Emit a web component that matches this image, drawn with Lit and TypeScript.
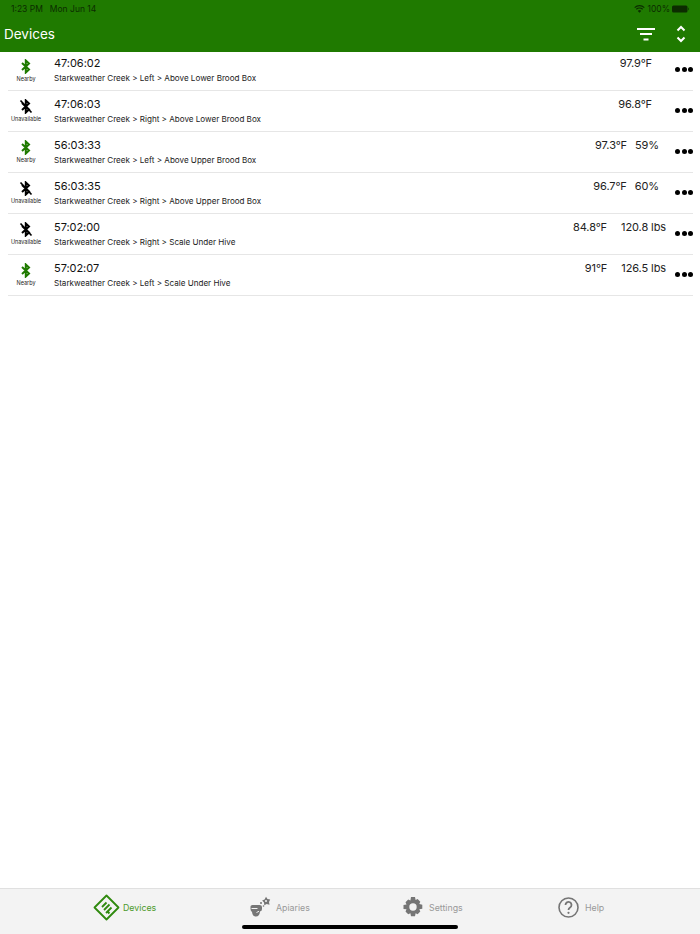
import { LitElement, html, css, svg } from "lit";
import { customElement } from "lit/decorators.js";

const rows = [
  { id: "47:06:02", path: "Starkweather Creek > Left > Above Lower Brood Box", near: true, temp: "97.9°F", extra: "", end: 41, gap: 8 },
  { id: "47:06:03", path: "Starkweather Creek > Right > Above Lower Brood Box", near: false, temp: "96.8°F", extra: "", end: 41, gap: 8 },
  { id: "56:03:33", path: "Starkweather Creek > Left > Above Upper Brood Box", near: true, temp: "97.3°F", extra: "59%", end: 34, gap: 8 },
  { id: "56:03:35", path: "Starkweather Creek > Right > Above Upper Brood Box", near: false, temp: "96.7°F", extra: "60%", end: 34, gap: 8 },
  { id: "57:02:00", path: "Starkweather Creek > Right > Scale Under Hive", near: false, temp: "84.8°F", extra: "120.8 lbs", end: 27, gap: 14 },
  { id: "57:02:07", path: "Starkweather Creek > Left > Scale Under Hive", near: true, temp: "91°F", extra: "126.5 lbs", end: 27, gap: 14 },
];

const bt = (near: boolean) => svg`<svg class="bt" width="14" height="15" viewBox="0 0 14 15" fill="none" stroke="${near ? "#1f7a00" : "#000"}" stroke-width="2">
  <path d="M3 4l7 6.500-3.200 3V1.500L10 4.500 3 11"/>
  ${near ? "" : svg`<path d="M1.500 1.500l11 12" stroke-width="1.700"/>`}
</svg>`;

@customElement("app-root")
export class AppRoot extends LitElement {
  static styles = css`
    :host { display: flex; flex-direction: column; width: 700px; height: 934px; background: #fff; font-family: Inter, "Liberation Sans", Arial, sans-serif; color: #111; overflow: hidden; }
    .top { background: #1f7a00; height: 52px; flex: none; display: flex; flex-direction: column; box-sizing: border-box; }
    .status { height: 17px; display: flex; align-items: center; padding: 0 10px 0 11px; font-size: 8.500px; color: #0c2c00; }
    .status .date { margin-left: 7px; }
    .status .right { margin-left: auto; display: flex; align-items: center; gap: 2px; }
    .bar { flex: 1; display: flex; align-items: center; padding: 0 14px 1px 4px; }
    .title { color: #fff; font-size: 13.500px; flex: 1; }
    .filter { margin-right: 21px; }
    .list { flex: 1; padding: 0 7px 0 8px; }
    .row { height: 41px; box-sizing: border-box; border-bottom: 1px solid #e6e6e6; display: flex; position: relative; }
    .row:first-child { height: 39px; }
    .state { width: 36px; display: flex; flex-direction: column; align-items: center; padding-top: 8px; font-size: 5.500px; color: #222; }
    .state .lab { margin-top: 2px; }
    .row:first-child .state { padding-top: 7px; }
    .main { margin-left: 10px; padding-top: 6px; flex: 1; }
    .row:first-child .main { padding-top: 4px; }
    .id { font-size: 11px; line-height: 14px; color: #111; letter-spacing: -0.05px; }
    .path { font-size: 8.080px; line-height: 11px; margin-top: 3px; color: #222; }
    .vals { position: absolute; top: 6px; display: flex; font-size: 11px; line-height: 14px; color: #222; letter-spacing: -0.1px; }
    .row:first-child .vals { top: 4px; }
    .dots { position: absolute; right: 0; top: 17px; display: flex; gap: 1.500px; }
    .row:first-child .dots { top: 15px; }
    .dots i { width: 5px; height: 5px; border-radius: 50%; background: #000; display: block; }
    .tabs { height: 45px; flex: none; background: #f3f3f3; border-top: 1px solid #e0e0e0; position: relative; display: flex; }
    .tab { position: absolute; top: 4px; display: flex; align-items: center; gap: 3px; font-size: 8.800px; color: #999; height: 28px; }
    .tab.on { color: #4c9a2a; }
    .apiaries { margin-left: 1px; }
    .settings { margin-left: 3px; }
    .help { margin-left: 3px; }
    .home { position: absolute; left: 242px; bottom: 5px; width: 216px; height: 4px; border-radius: 2px; background: #000; }
  `;

  render() {
    return html`
      <div class="top">
        <div class="status">
          <span>1:23 PM</span><span class="date">Mon Jun 14</span>
          <span class="right">
            <svg width="11" height="8" viewBox="0 0 11 8" fill="none" stroke="#0c2c00" stroke-width="1.200"><path d="M.7 2.600a7 7 0 0 1 9.600 0M2.300 4.300a4.700 4.700 0 0 1 6.400 0"/><path d="M5.500 7.800L3.800 5.900a2.500 2.500 0 0 1 3.400 0z" fill="#0c2c00" stroke="none"/></svg>
            <span>100%</span>
            <svg width="18" height="8" viewBox="0 0 18 8"><rect x="0" y="0.500" width="15.500" height="7" rx="1.500" fill="#0c2c00"/><rect x="16" y="2.800" width="1" height="2.400" fill="#0c2c00" opacity=".6"/></svg>
          </span>
        </div>
        <div class="bar">
          <span class="title">Devices</span>
          <svg class="filter" width="18" height="13" viewBox="0 0 18 13" fill="#fff"><rect x="0" y="0" width="18" height="2"/><rect x="3" y="5" width="12" height="2"/><rect x="6.500" y="10.500" width="5" height="2"/></svg>
          <svg width="10" height="18" viewBox="0 0 10 18" fill="none" stroke="#fff" stroke-width="2"><path d="M1.500 5.500L5 2l3.500 3.500M1.500 12.500L5 16l3.500-3.500"/></svg>
        </div>
      </div>
      <div class="list">
        ${rows.map(
          (r) => html`<div class="row">
            <div class="state">${bt(r.near)}<span class="lab">${r.near ? "Nearby" : "Unavailable"}</span></div>
            <div class="main">
              <div class="id">${r.id}</div>
              <div class="path">${r.path}</div>
            </div>
            <div class="vals" style="right:${r.end}px;gap:${r.gap}px">
              <span>${r.temp}</span>${r.extra ? html`<span>${r.extra}</span>` : ""}
            </div>
            <div class="dots"><i></i><i></i><i></i></div>
          </div>`
        )}
      </div>
      <div class="tabs">
        <div class="tab on" style="left:93px">
          <svg width="27" height="27" viewBox="0 0 27 27" fill="none" stroke="#2f8a0e" stroke-width="1.800">
            <path d="M13.500 1.500L25.500 13.500 13.500 25.500 1.500 13.500z" stroke-linejoin="round"/>
            <path d="M9 13l4.500-4.500M11 16l5.500-5.500M13 19l5.500-5.500M15 19.500l1.500-1.500"/>
          </svg>
          <span>Devices</span>
        </div>
        <div class="tab" style="left:249px">
          <svg width="23" height="23" viewBox="0 0 23 23" fill="#757575">
            <path d="M1.500 10.500q0-1.500 2-1.500h7q2.500 0 2.500 2v2q0 2-2 2.500-.5 5-4 5t-4-4.500q-1.500-1-1.500-3z"/>
            <path d="M2.500 12.500h6M7.500 16.500l2.500-1.200" fill="none" stroke="#f3f3f3" stroke-width="1"/>
            <path d="M17 .8l1.500 2.300 2.700.5-1.200 2.400.5 2.700-2.800-.6-2.400 1.200-.3-2.800-1.900-1.900 2.500-1z"/>
            <circle cx="17" cy="5" r="1" fill="#f3f3f3"/>
            <circle cx="12" cy="7" r="1"/><circle cx="14.500" cy="10" r=".8"/>
          </svg>
          <span class="apiaries">Apiaries</span>
        </div>
        <div class="tab" style="left:403px">
          <svg width="20" height="20" viewBox="0 0 20 20" fill="#757575">
            <path fill-rule="evenodd" d="M8 0h4l.6 3 2-.9 2.700 2.700-1 2.200 3 .7v4l-3 .6 1 2.200-2.700 2.700-2-1-.6 3H8l-.6-3-2.200 1-2.700-2.700 1-2.200L.500 12V8l3-.6-1-2.200 2.700-2.700 2.200 1zM10 6.300a3.700 3.700 0 1 0 0 7.400 3.700 3.700 0 0 0 0-7.400z"/>
          </svg>
          <span class="settings">Settings</span>
        </div>
        <div class="tab" style="left:558px">
          <svg width="21" height="21" viewBox="0 0 21 21" fill="none" stroke="#757575" stroke-width="1.600">
            <circle cx="10.500" cy="10.500" r="9.500"/><path d="M7.500 8a3 3 0 1 1 4.600 2.500c-1 .7-1.600 1.300-1.600 2.500" stroke-width="1.800"/><circle cx="10.500" cy="15.800" r="1.100" fill="#757575" stroke="none"/>
          </svg>
          <span class="help">Help</span>
        </div>
        <div class="home"></div>
      </div>
    `;
  }
}
